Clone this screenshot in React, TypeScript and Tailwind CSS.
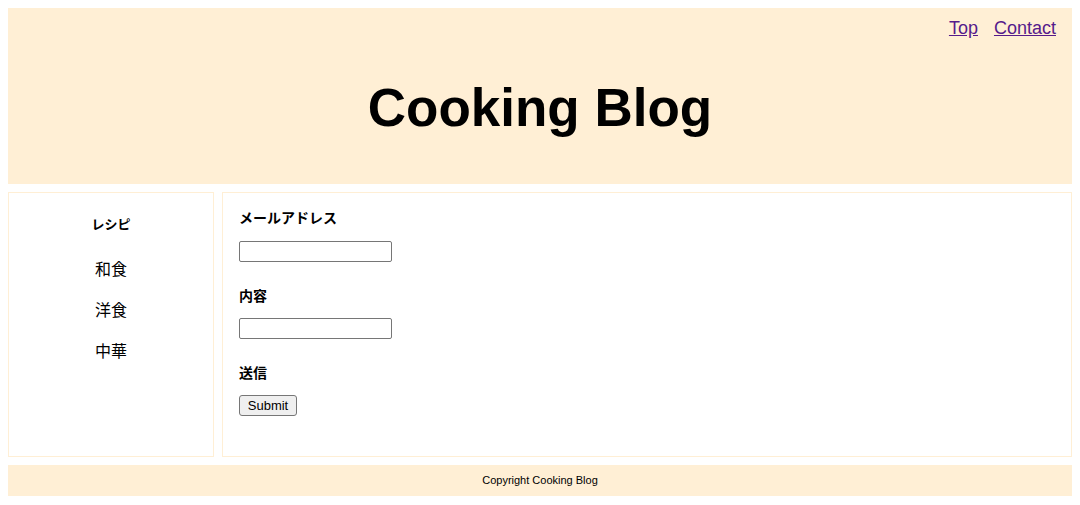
import React from 'react';

const font = { fontFamily: '"Liberation Sans", "Noto Sans CJK JP", sans-serif' };

const App: React.FC = () => {
  return (
    <div className="bg-white p-2 text-black" style={font}>
      {/* Header */}
      <header className="h-[176px] bg-[#ffefd5] flex flex-col">
        <nav className="flex justify-end gap-4 pr-4 pt-[9px] text-[18px] leading-[22px]">
          <a href="#top" className="text-[#551a8b] underline">Top</a>
          <a href="#contact" className="text-[#551a8b] underline">Contact</a>
        </nav>
        <h1 className="mt-[37px] text-center text-[53px] leading-[64px] font-bold">Cooking Blog</h1>
      </header>

      {/* Main */}
      <div className="mt-2 flex gap-2">
        <aside className="w-[206px] border border-[#ffefd5] flex flex-col items-center pt-[23px]">
          <h3 className="text-[13px] leading-[18px] font-bold">レシピ</h3>
          <ul className="mt-[25px] flex flex-col gap-[19px] text-[16px] leading-[22px] text-center">
            <li>和食</li>
            <li>洋食</li>
            <li>中華</li>
          </ul>
        </aside>

        <main className="flex-1 border border-[#ffefd5] pl-4 pt-[15px] pb-[40px] flex flex-col items-start">
          <label className="text-[14px] leading-[20px] font-bold">メールアドレス</label>
          <input type="text" className="mt-[13px] w-[153px] h-[21px] border border-[#767676] rounded-[2px] bg-white" />
          <label className="mt-[24px] text-[14px] leading-[20px] font-bold">内容</label>
          <input type="text" className="mt-[12px] w-[153px] h-[21px] border border-[#767676] rounded-[2px] bg-white" />
          <label className="mt-[24px] text-[14px] leading-[20px] font-bold">送信</label>
          <button className="mt-[12px] w-[58px] h-[21px] border border-[#767676] rounded-[3px] bg-[#efefef] text-[13px] leading-[19px]">
            Submit
          </button>
        </main>
      </div>

      {/* Footer */}
      <footer className="mt-2 h-[31px] bg-[#ffefd5] flex items-center justify-center text-[11px]">
        Copyright Cooking Blog
      </footer>
    </div>
  );
};

export default App;
